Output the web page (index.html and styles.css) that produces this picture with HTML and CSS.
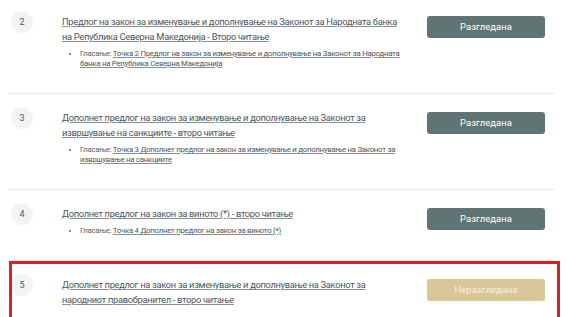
FILE: index.html
```html
<!DOCTYPE html>
<html lang="mk">
<head>
  <meta charset="UTF-8">
  <title>Дневен ред</title>
  <link rel="stylesheet" href="styles.css">
</head>
<body>
  <!-- Agenda items with status -->
  <ol class="agenda">
    <li class="item">
      <span class="num">2</span>
      <div class="body">
        <a href="#" class="title">Предлог на закон за изменување и дополнување на Законот за Народната банка на Република Северна Македонија - Второ читање</a>
        <ul class="votes">
          <li>Гласање: <a href="#">Точка 2 Предлог на закон за изменување и дополнување на Законот за Народната банка на Република Северна Македонија</a></li>
        </ul>
      </div>
      <a href="#" class="status status-done">Разгледана</a>
    </li>
    <li class="item">
      <span class="num">3</span>
      <div class="body">
        <a href="#" class="title">Дополнет предлог на закон за изменување и дополнување на Законот за извршување на санкциите - второ читање</a>
        <ul class="votes">
          <li>Гласање: <a href="#">Точка 3 Дополнет предлог на закон за изменување и дополнување на Законот за извршување на санкциите</a></li>
        </ul>
      </div>
      <a href="#" class="status status-done">Разгледана</a>
    </li>
    <li class="item">
      <span class="num">4</span>
      <div class="body">
        <a href="#" class="title">Дополнет предлог на закон за виното (*) - второ читање</a>
        <ul class="votes">
          <li>Гласање: <a href="#">Точка 4 Дополнет предлог на закон за виното (*)</a></li>
        </ul>
      </div>
      <a href="#" class="status status-done">Разгледана</a>
    </li>
    <li class="item item-current">
      <span class="num">5</span>
      <div class="body">
        <a href="#" class="title">Дополнет предлог на закон за изменување и дополнување на Законот за народниот правобранител - второ читање</a>
      </div>
      <a href="#" class="status status-pending">Неразгледана</a>
    </li>
  </ol>
</body>
</html>
```

FILE: styles.css
```css
body {
  margin: 0;
  background-color: #fff;
  font-family: Roboto, "Noto Sans", sans-serif;
  color: #4b555b;
}

.agenda {
  list-style: none;
  margin: -2px 15px 0 8px;
  padding: 0;
}

.item {
  display: flex;
  align-items: flex-start;
  padding: 16px 0 24px;
  border-bottom: 1px solid #e8e8e8;
}

.num {
  flex: none;
  width: 22px;
  height: 22px;
  margin: -3px 0 0 3px;
  border-radius: 50%;
  background-color: #f3f3f3;
  font-size: 9px;
  line-height: 22px;
  text-align: center;
  color: #555;
}

.body {
  flex: none;
  width: 345px;
  margin-left: 29px;
}

.title {
  display: block;
  font-size: 9.3px;
  letter-spacing: -0.3px;
  line-height: 15px;
  color: #4b555b;
  text-decoration: underline;
  text-decoration-color: #8a9095;
}

.votes {
  margin: 5px 0 0;
  padding-left: 18px;
  font-size: 7.8px;
  letter-spacing: -0.25px;
  line-height: 10px;
  list-style: disc;
  color: #5a6268;
}

.votes li {
  line-height: 10px;
}

.votes a {
  color: #4b555b;
  text-decoration: underline;
  text-decoration-color: #8a9095;
}

.status {
  flex: none;
  width: 118px;
  height: 22px;
  margin: 2px 0 0 20px;
  border-radius: 3px;
  font-size: 9.5px;
  line-height: 22px;
  text-align: center;
  text-decoration: none;
  color: #fff;
}

.status-done {
  background-color: #5f7574;
}

.status-pending {
  background-color: #d9c897;
  color: #f6f0e1;
}

/* highlighted current item */
.item-current {
  position: relative;
  border-bottom: none;
  padding-bottom: 14px;
}

.item-current::after {
  content: "";
  position: absolute;
  top: 0;
  left: 1px;
  right: -5px;
  bottom: 0;
  border: 3px solid #d2222c;
  pointer-events: none;
}
```
